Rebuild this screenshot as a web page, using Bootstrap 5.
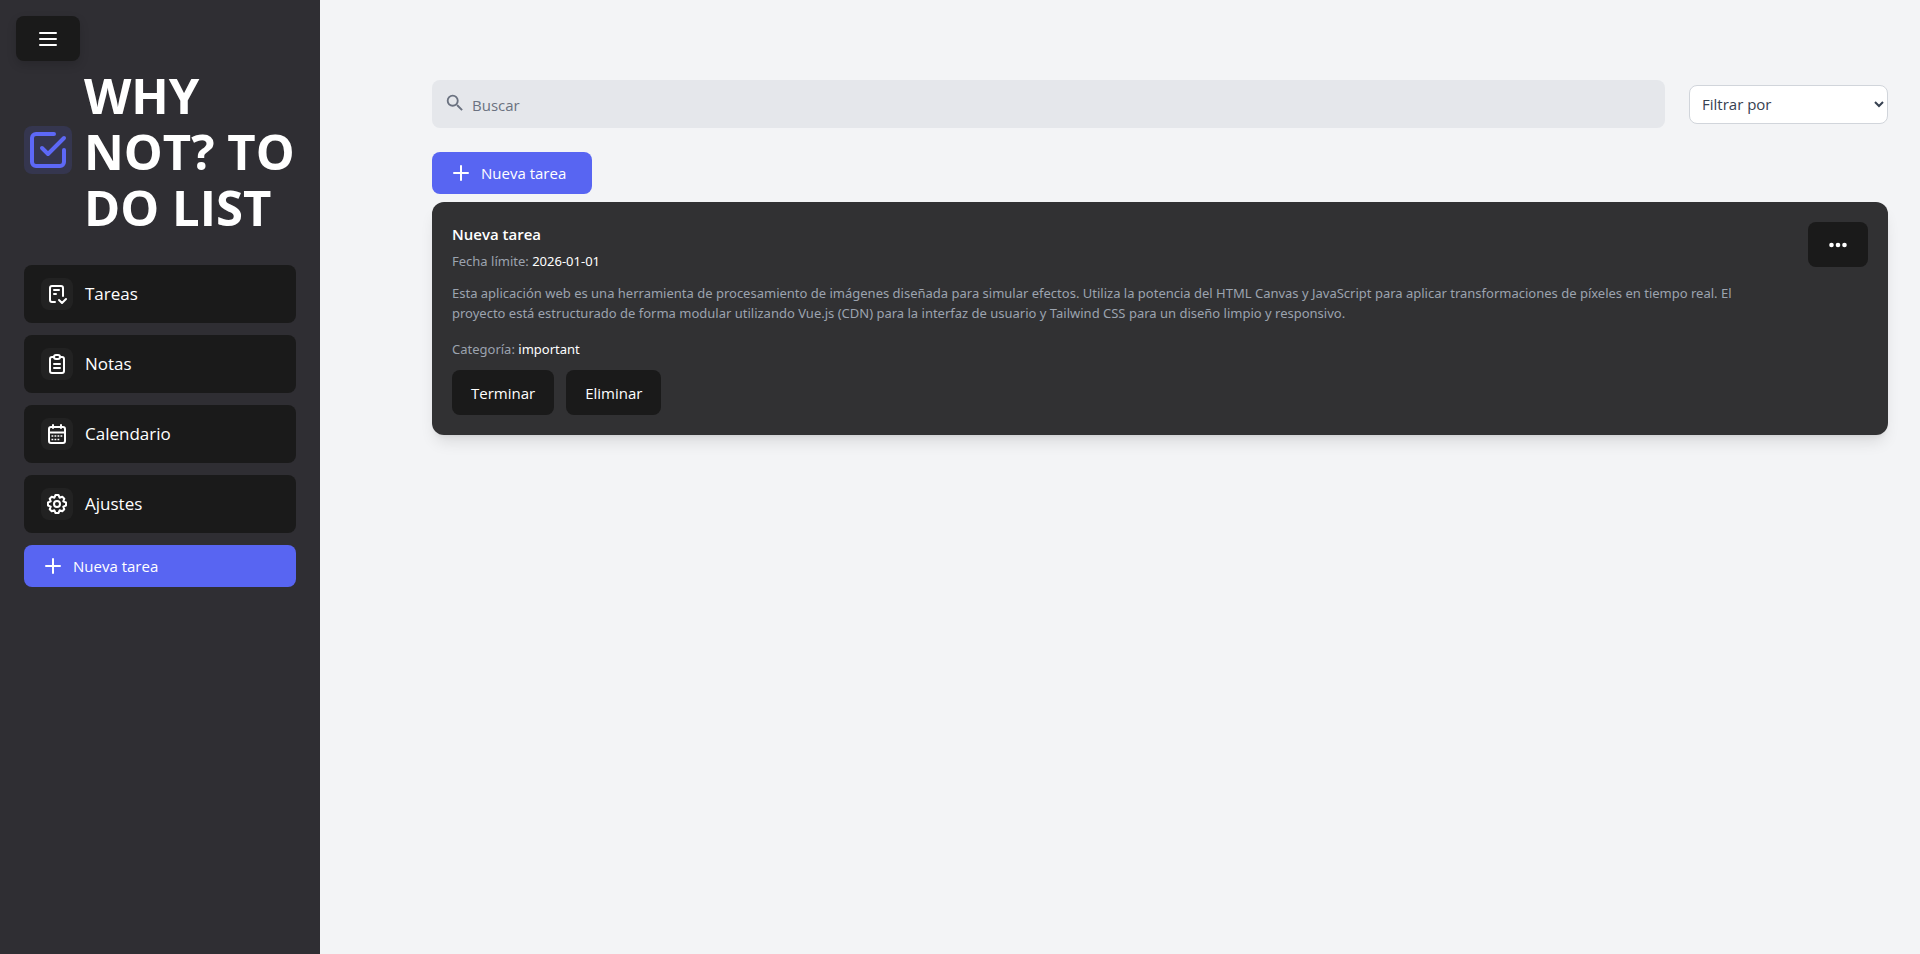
<!DOCTYPE html>
<html lang="es">
<head>
<meta charset="utf-8">
<meta name="viewport" content="width=device-width, initial-scale=1">
<title>Why not? To do list</title>
<link href="https://cdn.jsdelivr.net/npm/bootstrap@5.3.0/dist/css/bootstrap.min.css" rel="stylesheet">
<style>
body{font-family:"Open Sans","Noto Sans",sans-serif;font-size:15px;line-height:24px;background:#f3f4f6}
svg{display:block;flex:none;fill:none;stroke:currentColor;stroke-width:2;stroke-linecap:round;stroke-linejoin:round}
.sidebar{width:320px;background:#2f2e33}
.btn{--bs-btn-font-size:15px;--bs-btn-line-height:24px;--bs-btn-border-radius:8px}
.btn-ink{--bs-btn-bg:#1a1a1a;--bs-btn-color:#fff;--bs-btn-hover-bg:#101010;--bs-btn-hover-color:#fff;--bs-btn-padding-x:18px;--bs-btn-padding-y:9px;min-height:45px}
.btn-new{--bs-btn-bg:#5865f2;--bs-btn-color:#fff;--bs-btn-hover-bg:#4752d8;--bs-btn-hover-color:#fff;--bs-btn-padding-x:20px;--bs-btn-padding-y:8px;min-width:160px}
.btn-menu{width:64px;box-shadow:0 4px 10px rgba(0,0,0,.15)}
.btn-more{width:60px}
.gap-12{gap:12px}
.brand{margin-bottom:30px}
.logo{background:rgba(88,101,242,.15);color:#5d68f6;border-radius:8px;stroke-width:4}
.brand-title{font-size:49px;line-height:56px;font-weight:700;margin:0;padding-top:2px}
.side-link{background:#1a1a1a;color:#fff;font-size:17px;border-radius:8px;padding:13px 17px}
.side-link:hover{background:#101010;color:#fff}
.tile{background:rgba(255,255,255,.035);border-radius:8px}
.main-area{padding:80px 32px 32px 112px}
.search-box{height:48px;padding:1px 16px 0 40px;background:#e5e7eb;border:0;border-radius:8px;color:#374151}
.search-box::placeholder{color:#6b7280;opacity:1}
.search-icon{left:12px;top:12px;color:#6b7280}
.solid{fill:currentColor;stroke:none}
.days{stroke-width:1.5;stroke-linecap:butt}
.filter{width:199px;height:39px;padding:0 8px;background:#fff;color:#374151;border:1px solid #d1d5db;border-radius:8px}
.task{background:#313133;color:#fff;border-radius:12px;padding:20px;box-shadow:0 10px 15px -3px rgba(0,0,0,.1),0 4px 6px -4px rgba(0,0,0,.1)}
.task-title{font-size:15px;line-height:25px;font-weight:600;margin:0}
.task p{font-family:"Noto Sans","Open Sans",sans-serif;font-size:13px;line-height:20px;margin:0;color:#9ca3af}
.task p span{color:#fff}
.task-actions{margin-top:11px}
</style>
</head>
<body>
<div class="d-flex min-vh-100">
  <aside class="sidebar flex-shrink-0">
    <div class="px-3 pt-3">
      <button class="btn btn-ink btn-menu d-flex align-items-center justify-content-center" type="button" aria-label="Menú">
        <svg width="24" height="24" viewBox="0 0 24 24"><path d="M4 6h16M4 12h16M4 18h16"/></svg>
      </button>
    </div>
    <div class="px-4 pt-1">
      <div class="brand d-flex align-items-center gap-12 text-white">
        <svg class="logo" width="48" height="48" viewBox="0 0 48 48"><path d="M30 8H12a4 4 0 0 0-4 4v24a4 4 0 0 0 4 4h24a4 4 0 0 0 4-4V24M18 22l6 6L40 12"/></svg>
        <h1 class="brand-title">WHY NOT?&nbsp;TO DO&nbsp;LIST</h1>
      </div>
      <nav class="d-flex flex-column gap-12">
        <a class="side-link d-flex align-items-center gap-12 text-decoration-none" href="#">
          <svg class="tile" width="32" height="32" viewBox="0 0 32 32"><path d="M14 24h-3a2 2 0 0 1-2-2V10a2 2 0 0 1 2-2h9a2 2 0 0 1 2 2v8M13 12h5M13 16h2M18 22l3 3 4-4"/></svg>
          Tareas</a>
        <a class="side-link d-flex align-items-center gap-12 text-decoration-none" href="#">
          <svg class="tile" width="32" height="32" viewBox="0 0 32 32"><path d="M13 9h-2a2 2 0 0 0-2 2v12a2 2 0 0 0 2 2h10a2 2 0 0 0 2-2V11a2 2 0 0 0-2-2h-2M13 16h6M13 20h6"/><rect x="13" y="7" width="6" height="4" rx="2"/></svg>
          Notas</a>
        <a class="side-link d-flex align-items-center gap-12 text-decoration-none" href="#">
          <svg class="tile" width="32" height="32" viewBox="0 0 32 32"><rect x="8" y="9" width="16" height="16" rx="2"/><path d="M12 7v3M20 7v3M8 14.5h16"/><path class="days" d="M10.5 18h1.8m1.2 0h1.8m1.2 0h1.8m1.2 0h1.8M10.5 21.5h1.8m1.2 0h1.8m1.2 0h1.8"/></svg>
          Calendario</a>
        <a class="side-link d-flex align-items-center gap-12 text-decoration-none" href="#">
          <svg class="tile" width="32" height="32" viewBox="-16 -16 32 32"><circle r="3"/><path d="M9-1.5V1.5L6.3 2.6 7.3 5.3 5.3 7.3 2.6 6.3 1.5 9H-1.5L-2.6 6.3-5.3 7.3-7.3 5.3-6.3 2.6-9 1.5V-1.5L-6.3-2.6-7.3-5.3-5.3-7.3-2.6-6.3-1.5-9H1.5L2.6-6.3 5.3-7.3 7.3-5.3 6.3-2.6Z"/></svg>
          Ajustes</a>
        <button class="btn btn-new d-flex align-items-center gap-12" type="button">
          <svg width="16" height="16" viewBox="0 0 16 16"><path d="M8 1v14M1 8h14"/></svg>
          Nueva tarea</button>
      </nav>
    </div>
  </aside>
  <main class="main-area flex-grow-1">
    <div class="d-flex align-items-center gap-4 mb-4">
      <div class="position-relative flex-grow-1">
        <input class="search-box w-100 d-block" type="search" placeholder="Buscar" aria-label="Buscar">
        <svg class="search-icon solid position-absolute" width="22" height="22" viewBox="0 0 24 24"><path d="M15.5 14h-.79l-.28-.27A6.47 6.47 0 0 0 16 9.5 6.5 6.5 0 1 0 9.5 16c1.61 0 3.09-.59 4.23-1.57l.27.28v.79l5 4.99L20.49 19l-4.99-5zm-6 0C7.01 14 5 11.99 5 9.5S7.01 5 9.5 5 14 7.01 14 9.5 11.99 14 9.5 14z"/></svg>
      </div>
      <select class="filter" aria-label="Filtrar por"><option>Filtrar por</option><option>Categoría</option></select>
    </div>
    <button class="btn btn-new d-flex align-items-center gap-12 mb-2" type="button">
      <svg width="16" height="16" viewBox="0 0 16 16"><path d="M8 1v14M1 8h14"/></svg>
      Nueva tarea</button>
    <article class="task d-flex justify-content-between align-items-start">
      <div class="pe-5">
        <h2 class="task-title mb-1">Nueva tarea</h2>
        <p>Fecha límite: <span>2026-01-01</span></p>
        <p class="pt-2 mt-1">Esta aplicación web es una herramienta de procesamiento de imágenes diseñada para simular efectos. Utiliza la potencia del HTML Canvas y JavaScript para aplicar transformaciones de píxeles en tiempo real. El proyecto está estructurado de forma modular utilizando Vue.js (CDN) para la interfaz de usuario y Tailwind CSS para un diseño limpio y responsivo.</p>
        <p class="pt-3">Categoría: <span>important</span></p>
        <div class="task-actions d-flex gap-12">
          <button class="btn btn-ink" type="button">Terminar</button>
          <button class="btn btn-ink" type="button">Eliminar</button>
        </div>
      </div>
      <button class="btn btn-ink btn-more flex-shrink-0 d-flex align-items-center justify-content-center" type="button" aria-label="Más opciones">
        <svg class="solid" width="20" height="6" viewBox="0 0 20 6"><circle cx="3.5" cy="3" r="2.3"/><circle cx="10" cy="3" r="2.3"/><circle cx="16.5" cy="3" r="2.3"/></svg>
      </button>
    </article>
  </main>
</div>
<script src="https://cdn.jsdelivr.net/npm/bootstrap@5.3.0/dist/js/bootstrap.bundle.min.js"></script>
</body>
</html>
